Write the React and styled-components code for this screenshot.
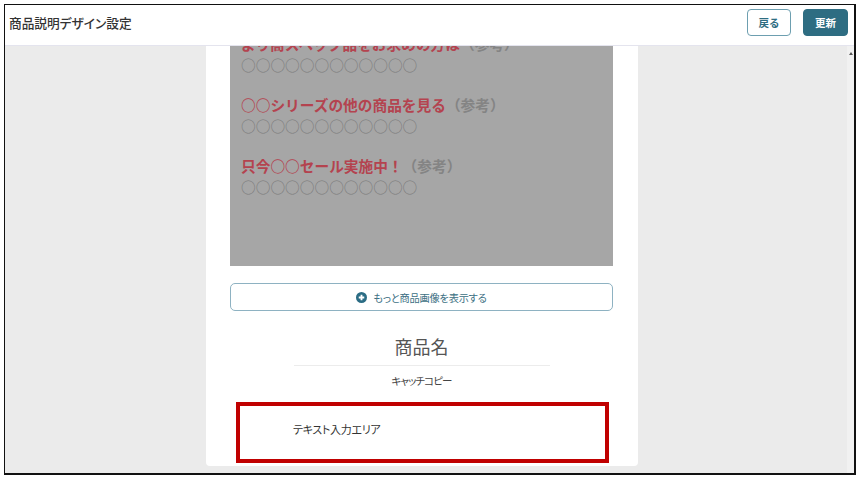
import React from "react";
import styled, { createGlobalStyle } from "styled-components";

const GlobalStyle = createGlobalStyle`
  html, body {
    margin: 0;
    padding: 0;
    background: #fff;
  }
  body {
    font-family: "Noto Sans CJK JP", "Noto Sans", sans-serif;
  }
`;

const Page = styled.div`
  width: 861px;
  height: 481px;
  padding: 4px 0 0 4px;
  box-sizing: border-box;
`;

const Frame = styled.div`
  width: 852px;
  height: 471px;
  box-sizing: border-box;
  border-style: solid;
  border-color: #111;
  border-width: 1px 2px 2px 1px;
  display: flex;
  flex-direction: column;
  overflow: hidden;
`;

const Header = styled.header`
  height: 41px;
  flex: none;
  box-sizing: border-box;
  background: #fff;
  border-bottom: 1px solid #e4e4ee;
  display: flex;
  align-items: center;
  justify-content: space-between;
  padding: 0 6px 5px 4px;
`;

const Title = styled.h1`
  margin: 0;
  font-size: 12.7px;
  font-weight: 500;
  color: #333;
  font-feature-settings: "palt";
`;

const Actions = styled.div`
  display: flex;
  gap: 12px;
`;

const HeadButton = styled.button`
  height: 27px;
  width: ${({ primary }) => (primary ? "45px" : "44px")};
  box-sizing: border-box;
  border-radius: 4px;
  border: 1px solid ${({ primary }) => (primary ? "#2e6d82" : "#6d9fb0")};
  background: ${({ primary }) => (primary ? "#2e6d82" : "#fff")};
  color: ${({ primary }) => (primary ? "#fff" : "#2e6d82")};
  font-family: inherit;
  font-size: 10.5px;
  font-weight: bold;
  padding: 0;
  cursor: pointer;
`;

const Body = styled.div`
  flex: 1;
  min-height: 0;
  display: flex;
`;

const Main = styled.main`
  flex: 1;
  background: #ebebeb;
  display: flex;
  flex-direction: column;
  justify-content: flex-end;
  align-items: center;
  padding: 0 8px 7px 0;
  overflow: hidden;
`;

const Scrollbar = styled.div`
  width: 7px;
  flex: none;
  background: #f1f1f1;
  display: flex;
  justify-content: center;
  padding-top: 6px;
  box-sizing: border-box;
`;

const ArrowUp = styled.div`
  width: 0;
  height: 0;
  border-left: 2.5px solid transparent;
  border-right: 2.5px solid transparent;
  border-bottom: 3px solid #555;
`;

const Card = styled.section`
  width: 432px;
  flex: none;
  box-sizing: border-box;
  background: #fff;
  border-radius: 0 0 4px 4px;
  padding: 0 25px 3px 24px;
`;

const ImageArea = styled.div`
  background: #a6a6a6;
  padding: 20px 11px 69px;
`;

const Block = styled.div`
  & + & {
    margin-top: 19px;
  }
`;

const Heading = styled.div`
  font-size: 14.7px;
  line-height: 22px;
  font-weight: bold;
  color: #b4434f;
  white-space: nowrap;
`;

const Note = styled.span`
  color: #848484;
`;

const Circles = styled.div`
  font-size: 14.7px;
  line-height: 20px;
  color: #7c7c7c;
`;

const MoreButton = styled.button`
  display: flex;
  align-items: center;
  justify-content: center;
  gap: 6px;
  width: 100%;
  height: 28px;
  margin-top: 17px;
  box-sizing: border-box;
  border: 1px solid #8eb2c2;
  border-radius: 5px;
  background: #fff;
  color: #3c6f83;
  font-family: inherit;
  font-size: 10.2px;
  letter-spacing: -0.2px;
  font-feature-settings: "palt";
  padding: 0;
  cursor: pointer;
`;

const ProductName = styled.h2`
  margin: 22px auto 0;
  width: 256px;
  padding-bottom: 6px;
  border-bottom: 1px solid #ececec;
  text-align: center;
  font-size: 18px;
  line-height: 26px;
  font-weight: normal;
  color: #555;
`;

const CatchCopy = styled.p`
  margin: 7px 0 0;
  text-align: center;
  font-size: 10.5px;
  line-height: 16px;
  letter-spacing: -0.9px;
  color: #444;
  font-feature-settings: "palt";
`;

const TextArea = styled.div`
  margin: 13px 4px 0 6px;
  border: 4px solid #c00000;
  padding: 15px 0 22px 53px;
  font-size: 11px;
  line-height: 16px;
  letter-spacing: -0.3px;
  color: #333;
  font-feature-settings: "palt";
`;

const PlusIcon = () => (
  <svg width="11" height="11" viewBox="0 0 12 12">
    <circle cx="6" cy="6" r="6" fill="#2b6c84" />
    <path d="M6 3v6M3 6h6" stroke="#fff" strokeWidth="2" />
  </svg>
);

const blocks = [
  "より高スペック品をお求めの方は",
  "○○シリーズの他の商品を見る",
  "只今○○セール実施中！",
];

export default function App() {
  return (
    <Page>
      <GlobalStyle />
      <Frame>
        <Header>
          <Title>商品説明デザイン設定</Title>
          <Actions>
            <HeadButton>戻る</HeadButton>
            <HeadButton primary>更新</HeadButton>
          </Actions>
        </Header>
        <Body>
          <Main>
            <Card>
              <ImageArea>
                {blocks.map((b) => (
                  <Block key={b}>
                    <Heading>
                      {b}
                      <Note>（参考）</Note>
                    </Heading>
                    <Circles>○○○○○○○○○○○○</Circles>
                  </Block>
                ))}
              </ImageArea>
              <MoreButton>
                <PlusIcon />
                もっと商品画像を表示する
              </MoreButton>
              <ProductName>商品名</ProductName>
              <CatchCopy>キャッチコピー</CatchCopy>
              <TextArea>テキスト入力エリア</TextArea>
            </Card>
          </Main>
          <Scrollbar>
            <ArrowUp />
          </Scrollbar>
        </Body>
      </Frame>
    </Page>
  );
}
